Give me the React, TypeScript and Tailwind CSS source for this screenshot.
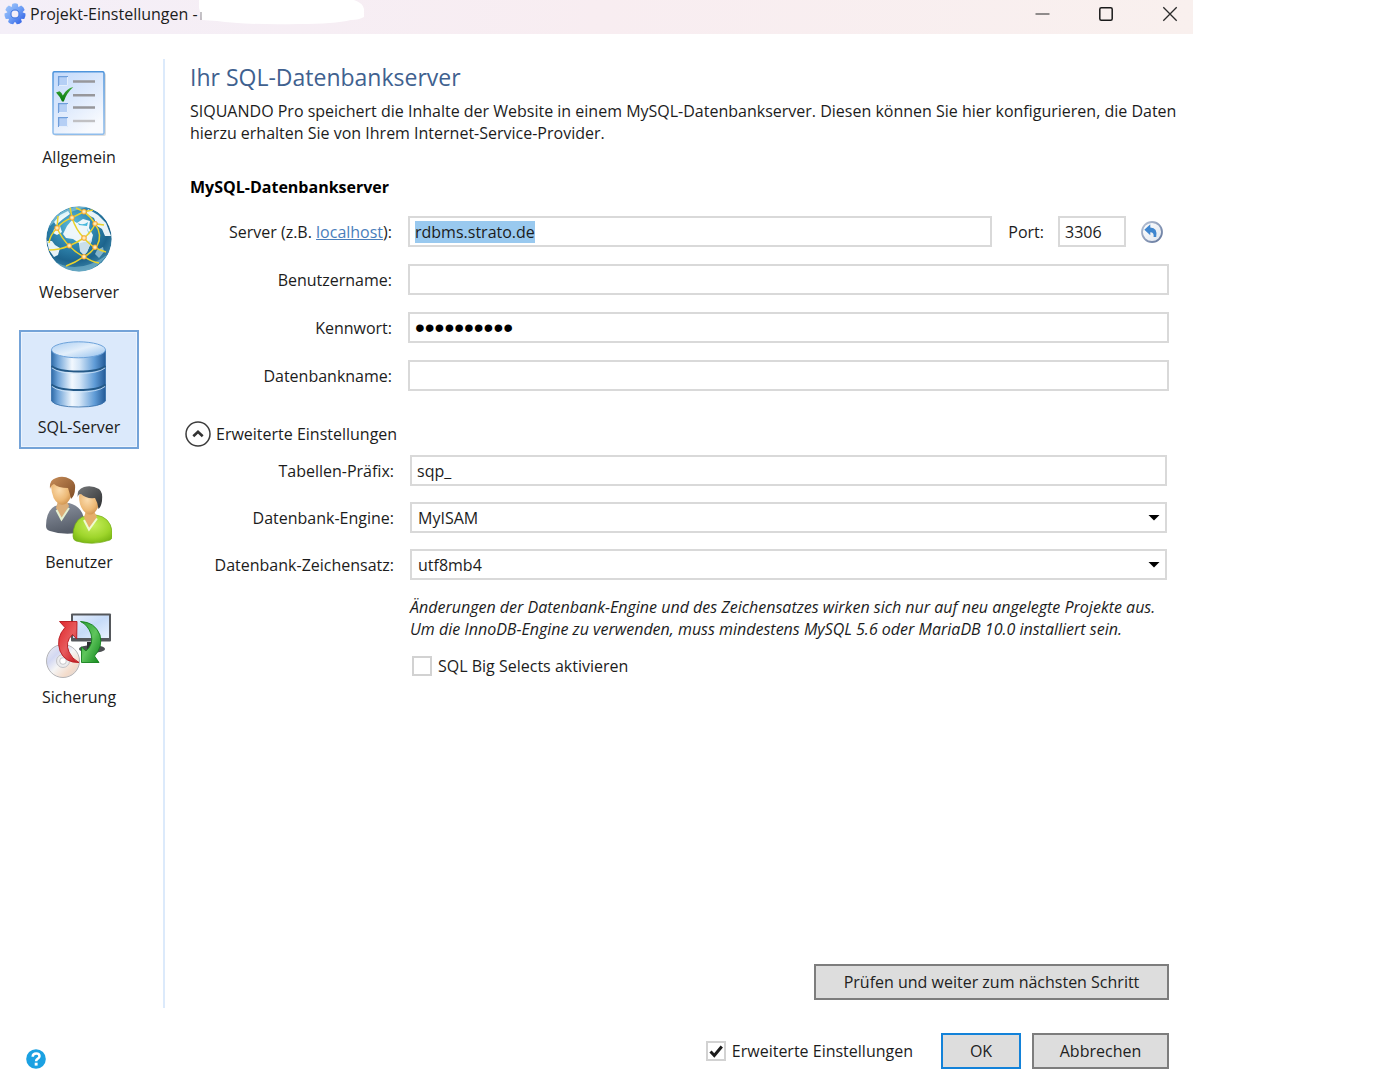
import { useEffect, useRef, useState } from 'react';
import type { ReactNode } from 'react';

const FIELD =
  'h-[31px] min-w-0 w-full border-2 border-[#d9d9d9] bg-white px-[5px] text-base text-[#1c1c1c] outline-none';
const BUTTON = 'h-9 border-2 border-[#7d7d7d] bg-[#dddddd] text-center text-base text-[#222]';

function GearIcon() {
  const teeth = [0, 1, 2, 3, 4, 5, 6];
  return (
    <svg viewBox="0 0 22 22" className="h-[22px] w-[22px] shrink-0" aria-hidden="true">
      <defs>
        <linearGradient id="gear" x1="0" y1="0" x2="1" y2="1">
          <stop offset="0" stopColor="#a9cdfb" />
          <stop offset="0.5" stopColor="#6f9ff5" />
          <stop offset="1" stopColor="#1f4fe0" />
        </linearGradient>
        <mask id="gearMask">
          {teeth.map((t) => (
            <path
              key={t}
              d="M7.6 5 L8.2 0.9 Q11 -0.2 13.8 0.9 L14.4 5 Z"
              fill="#fff"
              transform={`rotate(${(t * 360) / 7} 11 11)`}
            />
          ))}
          <circle cx="11" cy="11" r="7.8" fill="#fff" />
          <circle cx="11" cy="11" r="3.6" fill="#000" />
        </mask>
      </defs>
      <rect width="22" height="22" fill="url(#gear)" mask="url(#gearMask)" />
      <circle cx="11" cy="11" r="4.1" fill="none" stroke="#4a78dd" strokeWidth="0.9" />
    </svg>
  );
}

function ChecklistIcon() {
  return (
    <svg viewBox="0 0 66 66" className="h-[66px] w-[66px]" aria-hidden="true">
      <defs>
        <linearGradient id="sheet" x1="0" y1="0" x2="0.6" y2="1">
          <stop offset="0" stopColor="#c3dafb" />
          <stop offset="0.5" stopColor="#dbe8fc" />
          <stop offset="1" stopColor="#f8fafe" />
        </linearGradient>
        <linearGradient id="sheetEdge" x1="0" y1="0" x2="0" y2="1">
          <stop offset="0" stopColor="#4f95dc" />
          <stop offset="1" stopColor="#8fbdec" />
        </linearGradient>
        <linearGradient id="tick" x1="0" y1="0" x2="0" y2="1">
          <stop offset="0" stopColor="#3fa83c" />
          <stop offset="1" stopColor="#067a0b" />
        </linearGradient>
      </defs>
      <rect x="8" y="2" width="52" height="63" rx="2" fill="#000" opacity="0.13" />
      <rect x="7" y="0.7" width="51" height="62.5" rx="1.5" fill="url(#sheet)" stroke="url(#sheetEdge)" strokeWidth="1.5" />
      {[5, 32, 46].map((y) => (
        <g key={y}>
          <rect x="12" y={y} width="10" height="10" fill="#b5cff5" />
          <path d={`M12.6 ${y + 10} V${y + 0.6} H22`} fill="none" stroke="#6f9edb" strokeWidth="1.3" />
          <path d={`M21.5 ${y + 1} V${y + 9.5} H13`} fill="none" stroke="#e4eefc" strokeWidth="1" />
        </g>
      ))}
      <path d="M27 10.5 H49 M27 24.3 H49 M27 36.5 H49" stroke="#97979b" strokeWidth="2.4" />
      <path d="M27 50 H49" stroke="#c0c0c3" strokeWidth="2.4" />
      <path d="M10 21.5 L13.5 20.2 Q15.8 21.8 16.8 24.5 Q20.5 17.5 27.3 16 Q20.5 22 17.8 30.5 H16 Q14 25.5 10 21.5 Z" fill="url(#tick)" />
    </svg>
  );
}

function GlobeIcon() {
  const nodes = [
    [26, 11.7],
    [38, 5.7],
    [11, 22],
    [49, 17.7],
    [38, 32],
    [23.3, 39.7],
    [49, 41.3],
    [38, 50.7],
  ];
  return (
    <svg viewBox="0 0 66 66" className="h-[66px] w-[66px]" aria-hidden="true">
      <defs>
        <radialGradient id="sea" cx="0.42" cy="0.3" r="0.72">
          <stop offset="0" stopColor="#62c3e2" />
          <stop offset="0.4" stopColor="#3189b2" />
          <stop offset="0.75" stopColor="#1d648d" />
          <stop offset="1" stopColor="#3f89ac" />
        </radialGradient>
        <radialGradient id="node">
          <stop offset="0" stopColor="#fffbe4" />
          <stop offset="0.5" stopColor="#ffd98a" />
          <stop offset="1" stopColor="#f0961c" />
        </radialGradient>
        <clipPath id="globeClip">
          <circle cx="33" cy="33" r="32.8" />
        </clipPath>
      </defs>
      <g clipPath="url(#globeClip)">
        <circle cx="33" cy="33" r="32.8" fill="url(#sea)" />
        <path d="M17 28 L21 20 L26 14 L31 17 L37 13 L44 15 L43 22 L47 29 L45 37 L41 46 L38 49 L34 45 L33 37 L27 33 L20 32 Z" fill="#f7fbfd" opacity="0.95" />
        <path d="M32 17 Q37 20 42 16 L41 20 L33 19 Z M41 22 L44 29 L42 26 Z" fill="#48b8dc" />
        <path d="M34 37 L46 34 L41 46 L38 49 L34 45 Z" fill="#c9dfea" />
        <path d="M42 3 L52 9 L60 17 L65 30 L59 30 L56 23 L51 20 L48 12 L40 8 Z" fill="#f4fafc" opacity="0.95" />
        <path d="M14 9 L22 5 L24 8 L17 13 L10 19 L8 16 Z M8 23 L14 20 L16 26 L11 29 L7 27 Z" fill="#eef8fb" />
        <path d="M1 35 L6 35 L9 39 L14 42 L12 49 L8 51 L3 44 Z" fill="#e8f3f7" />
        <path d="M51 44 L57 41 L58 46 L53 52 L49 48 Z" fill="#84b5cb" />
        <path d="M3 21 Q20 4 44 1 L28 1 Q8 6 3 21 Z" fill="#c9f1fa" opacity="0.4" />
        <path d="M5 53 Q30 71 61 49 Q48 66 33 66 Q15 65 5 53 Z" fill="#9ad0e3" opacity="0.45" />
        <g fill="none" stroke="#e9d22c" strokeWidth="1.5">
          <path d="M24 1 Q25 6 26 11.7 Q30 24 38 32 Q44 39 49 41.3 Q53 44 60 46" />
          <path d="M26 11.7 Q31 9 38 5.7 Q45 11 49 17.7 Q57 29 51 40" />
          <path d="M30 2 L38 5.7 L47 4" />
          <path d="M26 11.7 Q17 15 11 22 Q4 29 3 37" />
          <path d="M12 10 L11 22 Q16 33 23.3 39.7 Q30 47 38 50.7 Q46 56 53 57" />
          <path d="M49 17.7 Q47 24 38 32 Q30 37 23.3 39.7 Q13 44 3 44" />
          <path d="M49 41.3 Q44 48 38 50.7 Q29 57 20 60" />
          <path d="M49 17.7 L58 19" />
        </g>
        {nodes.map(([x, y]) => (
          <circle key={`${x}-${y}`} cx={x} cy={y} r="2.7" fill="url(#node)" />
        ))}
      </g>
    </svg>
  );
}

function DatabaseIcon() {
  return (
    <svg viewBox="0 0 66 68" className="h-[68px] w-[66px]" aria-hidden="true">
      <defs>
        <linearGradient id="drum" x1="0" x2="1" y1="0" y2="0">
          <stop offset="0" stopColor="#2f6ba8" />
          <stop offset="0.12" stopColor="#6ea3d8" />
          <stop offset="0.38" stopColor="#f2f8fe" />
          <stop offset="0.52" stopColor="#d3e5f7" />
          <stop offset="0.8" stopColor="#5f9bd6" />
          <stop offset="1" stopColor="#235a97" />
        </linearGradient>
        <linearGradient id="lid" x1="0" x2="1" y1="0" y2="1">
          <stop offset="0" stopColor="#a9cdf2" />
          <stop offset="0.5" stopColor="#e3effb" />
          <stop offset="1" stopColor="#8ebdec" />
        </linearGradient>
      </defs>
      <path d="M5.5 9 V60 Q10 66 32.5 66 Q55 66 59.5 60 V9 Z" fill="url(#drum)" stroke="#356fa9" strokeWidth="0.8" />
      <path d="M5.5 25 Q12 30.5 32.5 30.5 Q53 30.5 59.5 25 M5.5 43.5 Q12 49 32.5 49 Q53 49 59.5 43.5" fill="none" stroke="#245987" strokeWidth="1.8" />
      <path d="M6 27 Q13 32.5 32.5 32.5 Q52 32.5 59 27 M6 45.5 Q13 51 32.5 51 Q52 51 59 45.5" fill="none" stroke="#d6e8fa" strokeWidth="1" opacity="0.8" />
      <ellipse cx="32.5" cy="8.8" rx="27" ry="8" fill="url(#lid)" stroke="#6ca2da" strokeWidth="1" />
    </svg>
  );
}

function UsersIcon() {
  return (
    <svg viewBox="0 0 66 68" className="h-[68px] w-[66px]" aria-hidden="true">
      <defs>
        <radialGradient id="skin" cx="0.4" cy="0.4" r="0.7">
          <stop offset="0" stopColor="#fbdcae" />
          <stop offset="0.6" stopColor="#edb976" />
          <stop offset="1" stopColor="#c98a45" />
        </radialGradient>
        <linearGradient id="greyCoat" x1="0" y1="0" x2="0.3" y2="1">
          <stop offset="0" stopColor="#8f96a3" />
          <stop offset="1" stopColor="#565d69" />
        </linearGradient>
        <radialGradient id="greenCoat" cx="0.5" cy="0.35" r="0.75">
          <stop offset="0" stopColor="#c7ee5c" />
          <stop offset="0.6" stopColor="#9ed52b" />
          <stop offset="1" stopColor="#6fae0c" />
        </radialGradient>
        <linearGradient id="brownHair" x1="0" y1="0" x2="1" y2="1">
          <stop offset="0" stopColor="#c78d59" />
          <stop offset="1" stopColor="#7e4c25" />
        </linearGradient>
        <linearGradient id="darkHair" x1="0" y1="0" x2="1" y2="1">
          <stop offset="0" stopColor="#77797b" />
          <stop offset="1" stopColor="#2d2f31" />
        </linearGradient>
      </defs>
      <path d="M0 50 Q0 35 9 30 L23 27 Q37 31 38 44 V56 Q18 60 4 55 Q0 54 0 50 Z" fill="url(#greyCoat)" />
      <path d="M10 32 L15.5 43 L23 30 L20 24 L12 25 Z" fill="#dcae78" />
      <path d="M10.5 34 L15.5 43.5 L23 32" fill="none" stroke="#e5f0d0" strokeWidth="2" />
      <path d="M5 10 Q6 4 15 4 Q25 4 26 13 Q26 22 21 27 Q17 30 13 28 Q6 24 5 10 Z" fill="url(#skin)" />
      <path d="M4 13 Q3 4 10 2 Q17 -1 24 3 Q30 6 29 13 Q29 19 25 23 Q24 18 22 12 Q12 12 8 8 Q5 9 4 13 Z" fill="url(#brownHair)" />
      <path d="M27 60 Q27 46 36 41 L50 39 Q64 41 66 55 Q67 63 64 64 Q47 70 30 65 Q27 64 27 60 Z" fill="url(#greenCoat)" stroke="#74ac19" strokeWidth="0.7" />
      <path d="M38 41 L43 53 L51 41 L48 35 L40 35 Z" fill="#e5ae6b" />
      <path d="M38 44 L43 53.5 L51 42.5" fill="none" stroke="#eefad0" strokeWidth="2" />
      <path d="M33 20 Q35 14 43 14 Q52 14 54 22 Q53 33 48 37 Q44 40 40 37 Q33 32 33 20 Z" fill="url(#skin)" />
      <path d="M31.500 21 Q31 13 38 11 Q46 9 53 13 Q57 16 56 25 Q55 31 52.500 33 Q52 27 49 22 Q40 23 35 18 Q32.500 18 31.500 21 Z" fill="url(#darkHair)" />
    </svg>
  );
}

function BackupIcon() {
  return (
    <svg viewBox="0 0 66 68" className="h-[68px] w-[66px]" aria-hidden="true">
      <defs>
        <linearGradient id="screen" x1="0" y1="0" x2="1" y2="1">
          <stop offset="0" stopColor="#e3edfc" />
          <stop offset="0.5" stopColor="#c6dbf8" />
          <stop offset="1" stopColor="#e9f2fe" />
        </linearGradient>
        <linearGradient id="disc" x1="0" y1="0" x2="1" y2="1">
          <stop offset="0" stopColor="#f0f0f2" />
          <stop offset="0.3" stopColor="#d3d8f2" />
          <stop offset="0.5" stopColor="#f5f5f5" />
          <stop offset="0.75" stopColor="#f4dccb" />
          <stop offset="1" stopColor="#d5d5d8" />
        </linearGradient>
        <linearGradient id="redArrow" x1="0" y1="0" x2="1" y2="1">
          <stop offset="0" stopColor="#e0262b" />
          <stop offset="0.5" stopColor="#e75b5d" />
          <stop offset="1" stopColor="#c11219" />
        </linearGradient>
        <linearGradient id="greenArrow" x1="0" y1="0" x2="1" y2="1">
          <stop offset="0" stopColor="#2a9a34" />
          <stop offset="0.5" stopColor="#5fc55c" />
          <stop offset="1" stopColor="#0c8418" />
        </linearGradient>
      </defs>
      <ellipse cx="46" cy="38" rx="13" ry="3.800" fill="#4c4f52" />
      <path d="M41 31 H50 V38 H41 Z" fill="#2f3133" />
      <rect x="25" y="2.500" width="40" height="28" rx="1" fill="#55585c" />
      <rect x="27" y="4.500" width="36" height="22.500" fill="url(#screen)" />
      <circle cx="17" cy="50" r="16.500" fill="url(#disc)" stroke="#b5b5b8" strokeWidth="1" />
      <circle cx="17" cy="50" r="6.500" fill="#ececee" stroke="#c2c2c6" strokeWidth="1" />
      <circle cx="17" cy="50" r="3.300" fill="#fff" stroke="#b9b9bd" strokeWidth="0.8" />
      <path d="M13.500 10.500 H31 L30.700 28 L26.500 23.500 Q18.500 31 23 41 Q26 48 33 51.500 Q19 52 14 40 Q9.500 27 19 16.500 Z" fill="url(#redArrow)" stroke="#b5161c" strokeWidth="0.9" />
      <path d="M34.500 10.500 Q49 11 54 24 Q57 36 48.500 45 L53 51.500 H35.500 V36 L40 40 Q48 33 45 23 Q42 14 34.500 10.500 Z" fill="url(#greenArrow)" stroke="#14801c" strokeWidth="0.9" />
    </svg>
  );
}

function UndoIcon() {
  return (
    <svg viewBox="0 0 22 22" className="h-[22px] w-[22px]" aria-hidden="true">
      <defs>
        <linearGradient id="ring" x1="0" y1="0" x2="1" y2="1">
          <stop offset="0" stopColor="#b9c4d6" />
          <stop offset="1" stopColor="#61759c" />
        </linearGradient>
        <linearGradient id="face" x1="0" y1="0" x2="1" y2="1">
          <stop offset="0" stopColor="#ffffff" />
          <stop offset="1" stopColor="#dfe5ee" />
        </linearGradient>
      </defs>
      <circle cx="11" cy="11" r="10" fill="url(#face)" stroke="url(#ring)" strokeWidth="1.800" />
      <path d="M3.300 8.800 L9.300 3.300 V6.400 Q17 6.800 15.200 16 H12.600 Q13.300 11.200 9.300 11.200 V14.200 Z" fill="#3f86cf" />
    </svg>
  );
}

function SideItem({ icon, label, active }: { icon: ReactNode; label: string; active?: boolean }) {
  return (
    <button
      type="button"
      aria-current={active ? 'page' : undefined}
      className={
        active
          ? 'flex h-[119px] w-[120px] flex-col items-center justify-between border-2 border-[#74a3d8] bg-[#dbe9fb] pt-[9px] pb-2 text-base leading-6 shadow-[inset_0_0_0_1px_#ebf3fd]'
          : 'flex h-[119px] w-[120px] flex-col items-center justify-between border-2 border-transparent pt-[9px] pb-2 text-base leading-6'
      }
    >
      {icon}
      <span>{label}</span>
    </button>
  );
}

function Row({ id, label, children }: { id: string; label: ReactNode; children: ReactNode }) {
  return (
    <div className="grid grid-cols-[202px_minmax(0,1fr)] items-center gap-x-4">
      <label htmlFor={id} className="text-right whitespace-nowrap">
        {label}
      </label>
      {children}
    </div>
  );
}

function SelectField({ id, value }: { id: string; value: string }) {
  return (
    <div className="relative">
      <select id={id} defaultValue={value} className={`${FIELD} block appearance-none pl-[6px] leading-[26px]`}>
        <option>{value}</option>
      </select>
      <svg viewBox="0 0 12 6" className="pointer-events-none absolute top-[13px] right-[7px] h-[6px] w-3" aria-hidden="true">
        <path d="M0.5 0 H11.5 L6 5.5 Z" fill="#000" />
      </svg>
    </div>
  );
}

function Tick({ id, label, initial }: { id: string; label: string; initial: boolean }) {
  const [on, setOn] = useState(initial);
  return (
    <label htmlFor={id} className="flex items-center gap-[6px]">
      <span className="relative block h-5 w-5">
        <input
          id={id}
          type="checkbox"
          checked={on}
          onChange={() => setOn(!on)}
          className="block h-5 w-5 appearance-none border-2 border-[#d2d2d2] bg-white"
        />
        {on && (
          <svg viewBox="0 0 20 20" className="pointer-events-none absolute inset-0 h-5 w-5" aria-hidden="true">
            <path d="M4.500 10.500 L8.300 14.500 L15.800 5.500" fill="none" stroke="#1c1c1c" strokeWidth="3" />
          </svg>
        )}
      </span>
      {label}
    </label>
  );
}

export default function App() {
  const server = useRef<HTMLInputElement>(null);
  useEffect(() => {
    server.current?.focus();
    server.current?.select();
  }, []);

  return (
    <div className="flex min-h-screen w-full max-w-[1193px] flex-col bg-white font-['Segoe_UI','Open_Sans',sans-serif] text-base leading-[22px] text-[#1c1c1c]">
      <header className="relative flex h-[34px] items-start justify-between bg-linear-to-r from-[#f4eff8] via-[#f8edf1] to-[#f9f0ee]">
        <div className="flex items-center gap-1 pt-[3px] pl-1">
          <GearIcon />
          <h1 className="whitespace-nowrap">Projekt-Einstellungen -</h1>
        </div>
        <svg viewBox="0 0 166 25" className="absolute top-0 left-[199px] h-[25px] w-[166px]" aria-hidden="true">
          <path d="M0 0 H155 Q164 3 165 9 V17 Q160 20 152 20 Q135 24 100 24 Q45 25 18 21 L3 20 L0 8 Z" fill="#fff" />
          <path d="M2 12 V20" stroke="#8d8a90" strokeWidth="1" />
        </svg>
        <div className="flex gap-[18px]">
          <button type="button" aria-label="Minimieren" className="flex h-7 w-[46px] items-center justify-center">
            <svg viewBox="0 0 16 16" className="h-4 w-4" aria-hidden="true">
              <path d="M1.500 8 H15.500" stroke="#555" strokeWidth="1.300" />
            </svg>
          </button>
          <button type="button" aria-label="Maximieren" className="flex h-7 w-[46px] items-center justify-center">
            <svg viewBox="0 0 16 16" className="h-4 w-4" aria-hidden="true">
              <rect x="1.800" y="1.800" width="12.400" height="12.400" rx="1.500" fill="none" stroke="#1a1a1a" strokeWidth="1.500" />
            </svg>
          </button>
          <button type="button" aria-label="Schließen" className="flex h-7 w-[46px] items-center justify-center">
            <svg viewBox="0 0 16 16" className="h-4 w-4" aria-hidden="true">
              <path d="M1.300 1.300 L14.700 14.700 M14.700 1.300 L1.300 14.700" stroke="#2a2a2a" strokeWidth="1.300" />
            </svg>
          </button>
        </div>
      </header>

      <div className="flex flex-1 pt-[25px]">
        <nav className="flex flex-col gap-4 border-r-2 border-[#dceafb] pt-px pr-6 pl-[19px]">
          <SideItem icon={<ChecklistIcon />} label="Allgemein" />
          <SideItem icon={<GlobeIcon />} label="Webserver" />
          <SideItem icon={<DatabaseIcon />} label="SQL-Server" active />
          <SideItem icon={<UsersIcon />} label="Benutzer" />
          <SideItem icon={<BackupIcon />} label="Sicherung" />
        </nav>

        <main className="flex min-w-0 flex-1 flex-col pr-6 pb-2 pl-[25px]">
          <h2 className="text-[23px] leading-9 text-[#40618f]">Ihr SQL-Datenbankserver</h2>
          <p className="mt-[5px] whitespace-nowrap">
            SIQUANDO Pro speichert die Inhalte der Website in einem MySQL-Datenbankserver. Diesen können Sie hier
            konfigurieren, die Daten
            <br />
            hierzu erhalten Sie von Ihrem Internet-Service-Provider.
          </p>
          <h3 className="mt-8 font-bold text-black">MySQL-Datenbankserver</h3>

          <div className="mt-[18px] flex flex-col gap-[17px]">
            <Row
              id="server"
              label={
                <>
                  Server (z.B.{' '}
                  <a href="#localhost" className="text-[#4a7ebb] underline">
                    localhost
                  </a>
                  ):
                </>
              }
            >
              <div className="flex items-center">
                <input
                  id="server"
                  ref={server}
                  defaultValue="rdbms.strato.de"
                  className={`${FIELD} selection:bg-[#99c9ef] selection:text-[#1c1c1c]`}
                />
                <label htmlFor="port" className="mr-[14px] ml-4">
                  Port:
                </label>
                <input id="port" defaultValue="3306" className={`${FIELD} max-w-[68px] shrink-0`} />
                <button type="button" aria-label="Zurücksetzen" className="mr-[6px] ml-[15px] shrink-0">
                  <UndoIcon />
                </button>
              </div>
            </Row>
            <Row id="user" label="Benutzername:">
              <input id="user" className={FIELD} />
            </Row>
            <Row id="password" label="Kennwort:">
              <input
                id="password"
                type="password"
                defaultValue="0000000000"
                className="h-[31px] w-full min-w-0 border-2 border-[#d9d9d9] bg-white px-[5px] font-['Liberation_Sans',sans-serif] text-[28px] leading-[27px] text-black outline-none"
              />
            </Row>
            <Row id="database" label="Datenbankname:">
              <input id="database" className={FIELD} />
            </Row>
          </div>

          <button type="button" aria-expanded="true" className="mt-[30px] -ml-[5px] flex items-center gap-[5px] self-start">
            <svg viewBox="0 0 26 26" className="h-[26px] w-[26px]" aria-hidden="true">
              <circle cx="13" cy="13" r="12" fill="#fff" stroke="#3c3c3c" strokeWidth="1.500" />
              <path d="M8.300 15.300 L13 10.800 L17.700 15.300" fill="none" stroke="#333" strokeWidth="2.600" />
            </svg>
            Erweiterte Einstellungen
          </button>

          <div className="mt-2 flex flex-col gap-4 px-[2px]">
            <Row id="prefix" label="Tabellen-Präfix:">
              <input id="prefix" defaultValue="sqp_" className={FIELD} />
            </Row>
            <Row id="engine" label="Datenbank-Engine:">
              <SelectField id="engine" value="MyISAM" />
            </Row>
            <Row id="charset" label="Datenbank-Zeichensatz:">
              <SelectField id="charset" value="utf8mb4" />
            </Row>
            <div className="pl-[218px]">
              <p className="whitespace-nowrap italic">
                Änderungen der Datenbank-Engine und des Zeichensatzes wirken sich nur auf neu angelegte Projekte aus.
                <br />
                Um die InnoDB-Engine zu verwenden, muss mindestens MySQL 5.6 oder MariaDB 10.0 installiert sein.
              </p>
              <div className="mt-[15px] pl-[2px]">
                <Tick id="bigSelects" label="SQL Big Selects aktivieren" initial={false} />
              </div>
            </div>
          </div>

          <button type="button" className={`${BUTTON} mt-auto w-[355px] self-end`}>
            Prüfen und weiter zum nächsten Schritt
          </button>
        </main>
      </div>

      <footer className="flex items-center pt-[25px] pr-6 pb-[14px] pl-[26px]">
        <button type="button" aria-label="Hilfe" className="mt-4 mr-auto">
          <svg viewBox="0 0 20 20" className="h-5 w-5" aria-hidden="true">
            <circle cx="10" cy="10" r="9.800" fill="#1ba1e2" />
            <path d="M6.700 7.800 Q6.700 4.500 10.200 4.500 Q13.500 4.500 13.500 7.200 Q13.500 8.800 11.500 9.900 Q10.100 10.700 10.100 12.200" fill="none" stroke="#fff" strokeWidth="2.500" />
            <rect x="8.700" y="13.700" width="2.900" height="2.900" fill="#fff" />
          </svg>
        </button>
        <Tick id="advanced" label="Erweiterte Einstellungen" initial />
        <button type="button" className="ml-7 h-9 w-20 border-2 border-[#1382d9] bg-[#dddddd] text-base text-[#222]">
          OK
        </button>
        <button type="button" className={`${BUTTON} ml-[11px] w-[137px]`}>
          Abbrechen
        </button>
      </footer>
    </div>
  );
}
